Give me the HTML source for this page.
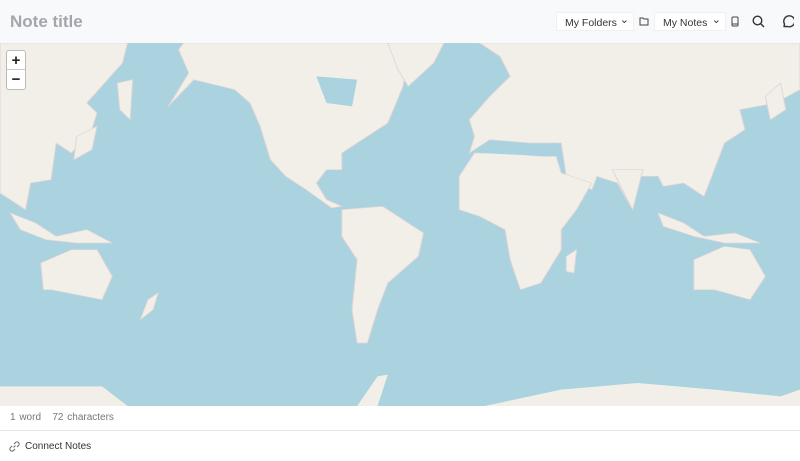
<!DOCTYPE html>
<html><head><meta charset="utf-8"><style>
*{margin:0;padding:0;box-sizing:border-box}
body{width:800px;height:461px;overflow:hidden;background:#fff;font-family:"Liberation Sans",sans-serif;position:relative}
.hdr{position:absolute;left:0;top:0;width:800px;height:43px;background:#f8f9fb}
.title{position:absolute;left:10px;top:12px;font-size:17px;font-weight:bold;color:#a3a6ad}
.sel{position:absolute;top:12px;height:19px;background:#fff;font-size:10.5px;color:#333;padding:4px 0 0 8px;border:1px solid #f0f0f0}
.sel .c{position:absolute;right:4px;top:0px;font-size:11px}
.map{position:absolute;left:0;top:43px;width:800px;height:363px;background:#aad3df;overflow:hidden}
.zoom{position:absolute;left:6px;top:50px;width:20px;height:40px;background:#fff;border:1px solid #bbb;border-radius:3px;font-size:15px;font-weight:bold;color:#222;text-align:center;line-height:19px}
.zoom div:first-child{border-bottom:1px solid #ccc;height:19px}
.status{position:absolute;left:10px;top:412px;font-size:10px;color:#777;word-spacing:1px}
.line{position:absolute;left:0;top:430px;width:800px;height:1px;background:#e6e6e6}
.conn{position:absolute;left:25px;top:441px;font-size:10px;color:#333}
</style></head><body>
<div class="hdr">
<div class="title">Note title</div>
<div class="sel" style="left:556px;width:78px">My Folders<span class="c">&#8964;</span></div>
<svg style="position:absolute;left:639px;top:16px" width="10" height="10" viewBox="0 0 10 10"><path d="M1 2h3l1 1h4v6H1z" fill="none" stroke="#444" stroke-width="1"/></svg>
<div class="sel" style="left:654px;width:72px">My Notes<span class="c">&#8964;</span></div>
<svg style="position:absolute;left:731px;top:16px" width="8" height="11" viewBox="0 0 8 11"><rect x="1" y="1" width="6" height="9" rx="1" fill="none" stroke="#444"/><path d="M1 8h6" stroke="#444"/></svg>
<svg style="position:absolute;left:752px;top:15px" width="13" height="13" viewBox="0 0 13 13"><circle cx="5.5" cy="5.5" r="4.3" fill="none" stroke="#333" stroke-width="1.4"/><path d="M8.6 8.6L12 12" stroke="#333" stroke-width="1.4"/></svg>
<svg style="position:absolute;left:780px;top:14px" width="14" height="14" viewBox="0 0 14 14"><path d="M4 12.5L4.5 10A5.5 5.5 0 1 1 7.5 12.5z" fill="none" stroke="#333" stroke-width="1.4" stroke-linejoin="round"/></svg>
</div>
<div class="map">
<svg width="800" height="363" viewBox="0 0 1568 1089" preserveAspectRatio="none" fill="#f2efe9" stroke="#e3d6d6" stroke-width="2">
<path d="M0 0H250L240 60L170 180L190 210L180 260L140 330L110 300L100 410L60 420L50 500L20 470L0 450Z"/>
<path d="M230 120L260 110L255 230L235 200Z"/>
<path d="M150 280L190 250L180 320L145 350Z"/>
<path d="M360 0H760L800 30L790 130L760 240L700 300L670 330L670 380L640 380L620 420L640 470L670 490L650 495L600 440L560 400L530 350L510 250L490 180L460 140L380 110L330 190L370 90L350 20Z"/>
<path d="M620 100L700 110L690 190L640 180Z" fill="#aad3df" stroke="none"/>
<path d="M760 0H870L850 60L800 130L780 80Z"/>
<path d="M670 500L750 490L830 570L820 640L760 720L740 800L720 900L700 900L690 800L700 650L670 580Z"/>
<path d="M940 0H1568V140L1520 180L1450 200L1460 260L1420 300L1400 380L1380 460L1340 420L1300 430L1290 400L1250 400L1240 500L1210 420L1170 400L1160 440L1110 400L1100 300L1040 300L960 290L920 330L930 280L920 230L960 160L1000 100L980 40Z"/>
<path d="M1200 380L1260 380L1240 500Z"/>
<path d="M1100 390L1160 420L1130 500L1100 560L1100 620L1060 720L1020 740L1000 650L990 560L940 520L900 500L900 400L930 330L990 330L1060 340L1090 340Z"/>
<path d="M940 310L1090 300L1080 340L940 330Z" fill="#aad3df" stroke="none"/>
<path d="M1360 650L1420 610L1470 620L1500 700L1470 770L1400 740L1360 740Z"/>
<path d="M80 660L140 620L190 620L220 700L200 770L100 740L85 740Z"/>
<path d="M1110 640L1130 620L1125 690L1110 685Z"/>
<path d="M1290 510L1340 540L1380 580L1440 570L1490 600L1420 600L1360 580L1300 550Z"/>
<path d="M20 510L70 540L110 580L170 560L220 600L150 600L90 590L40 560Z"/>
<path d="M1500 160L1530 120L1540 200L1510 230Z"/>
<path d="M0 1030L200 1030L250 1089H0Z" stroke="none"/>
<path d="M950 1089L1100 1040L1250 1020L1400 1040L1530 1060L1568 1040V1089Z" stroke="none"/>
<path d="M700 1089L740 1000L760 995L740 1089Z" stroke="none"/>
<path d="M290 770L310 750L300 800L275 830Z"/>
</svg>
</div>
<div class="zoom"><div>+</div><div>&#8722;</div></div>
<div class="status">1 word &nbsp; 72 characters</div>
<div class="line"></div>
<svg style="position:absolute;left:9px;top:441px" width="11" height="11" viewBox="0 0 11 11"><path d="M4.5 6.5L6.5 4.5M5 3L6.5 1.5a2 2 0 0 1 3 3L8 6M6 8L4.5 9.5a2 2 0 0 1-3-3L3 5" fill="none" stroke="#666" stroke-width="1"/></svg>
<div class="conn">Connect Notes</div>
</body></html>
